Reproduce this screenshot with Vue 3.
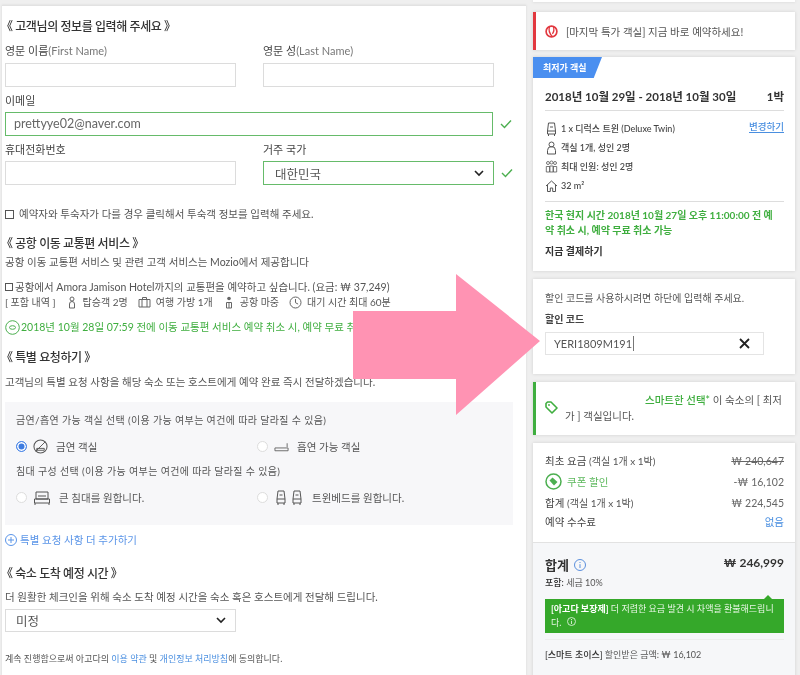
<template>
  <div class="page">
    <div class="left">
      <h2 class="title first">《 고객님의 정보를 입력해 주세요 》</h2>
      <div class="row name-row">
        <div class="field">
          <label>영문 이름<span class="en">(First Name)</span></label>
          <div class="input"></div>
        </div>
        <div class="field">
          <label>영문 성<span class="en">(Last Name)</span></label>
          <div class="input"></div>
        </div>
      </div>
      <div class="field wide">
        <label>이메일</label>
        <div class="with-check">
          <div class="input ok email">prettyye02@naver.com</div>
          <svg class="check" width="12" height="10" viewBox="0 0 12 10"><path d="M1 5l3.5 3.5L11 1.5" fill="none" stroke="#4caf50" stroke-width="1.4"/></svg>
        </div>
      </div>
      <div class="row phone-row">
        <div class="field">
          <label>휴대전화번호</label>
          <div class="input"></div>
        </div>
        <div class="field">
          <label>거주 국가</label>
          <div class="with-check">
            <div class="input ok select country">
              <span>대한민국</span>
              <svg width="10" height="7" viewBox="0 0 10 7"><path d="M1 1l4 4 4-4" fill="none" stroke="#222" stroke-width="1.6"/></svg>
            </div>
            <svg class="check" width="12" height="10" viewBox="0 0 12 10"><path d="M1 5l3.5 3.5L11 1.5" fill="none" stroke="#4caf50" stroke-width="1.4"/></svg>
          </div>
        </div>
      </div>
      <div class="guest-check">
        <span class="box"></span>
        <span>예약자와 투숙자가 다를 경우 클릭해서 투숙객 정보를 입력해 주세요.</span>
      </div>

      <h2 class="title airport">《 공항 이동 교통편 서비스 》</h2>
      <p class="line provider">공항 이동 교통편 서비스 및 관련 고객 서비스는 Mozio에서 제공합니다</p>
      <div class="line want">
        <span class="box small"></span>
        <span>공항에서 Amora Jamison Hotel까지의 교통편을 예약하고 싶습니다. (요금: ₩ 37,249)</span>
      </div>
      <div class="line includes">
        <span>[ 포함 내역 ]</span>
        <svg class="ic" width="12" height="13" viewBox="0 0 12 13"><circle cx="6" cy="3" r="2" fill="none" stroke="#666"/><path d="M3.5 12V8a2.5 2.5 0 0 1 5 0v4z" fill="none" stroke="#666"/></svg>
        <span>탑승객 2명</span>
        <svg class="ic" width="13" height="12" viewBox="0 0 13 12"><path d="M1 3.5h11V11H1zM4.5 3.5V1.5h4v2M4 3.5V11M9 3.5V11" fill="none" stroke="#666"/></svg>
        <span>여행 가방 1개</span>
        <svg class="ic" width="12" height="13" viewBox="0 0 12 13"><circle cx="6" cy="2.5" r="1.8" fill="#666"/><path d="M3.5 12V6.5h5V12zM6 6.5V12" fill="none" stroke="#666"/></svg>
        <span>공항 마중</span>
        <svg class="ic" width="13" height="13" viewBox="0 0 13 13"><circle cx="6.5" cy="6.5" r="5.5" fill="none" stroke="#666"/><path d="M6.5 3v3.7l2.6 1.4" fill="none" stroke="#666"/></svg>
        <span>대기 시간 최대 60분</span>
      </div>
      <div class="free-cancel">
        <svg width="15" height="15" viewBox="0 0 15 15"><circle cx="7.5" cy="7.5" r="6.8" fill="none" stroke="#4caf50"/><ellipse cx="7.5" cy="7.5" rx="3" ry="1.8" fill="none" stroke="#4caf50"/></svg>
        <span>2018년 10월 28일 07:59 전에 이동 교통편 서비스 예약 취소 시, 예약 무료 취소 가능</span>
      </div>

      <h2 class="title special">《 특별 요청하기 》</h2>
      <p class="line special-desc">고객님의 특별 요청 사항을 해당 숙소 또는 호스트에게 예약 완료 즉시 전달하겠습니다.</p>
      <div class="request-box">
        <p class="req-head">금연/흡연 가능 객실 선택 (이용 가능 여부는 여건에 따라 달라질 수 있음)</p>
        <div class="req-row">
          <div class="opt">
            <span class="radio on"></span>
            <svg class="opt-ic" width="15" height="15" viewBox="0 0 16 16"><circle cx="8" cy="8" r="7" fill="none" stroke="#555" stroke-width="1.1"/><path d="M3 13L13 3M4 10h8v2H4z" fill="none" stroke="#555"/></svg>
            <span>금연 객실</span>
          </div>
          <div class="opt">
            <span class="radio"></span>
            <svg class="opt-ic" width="15" height="10" viewBox="0 0 16 10"><path d="M1 6h14v3H1zM14 1v4" fill="none" stroke="#666"/></svg>
            <span>흡연 가능 객실</span>
          </div>
        </div>
        <p class="req-head bed">침대 구성 선택 (이용 가능 여부는 여건에 따라 달라질 수 있음)</p>
        <div class="req-row">
          <div class="opt">
            <span class="radio"></span>
            <svg class="opt-ic" width="18" height="14" viewBox="0 0 18 14"><path d="M3 1h12v7H3zM1.5 8h15v4h-15zM5 5h8M2 12v2M16 12v2" fill="none" stroke="#555"/></svg>
            <span>큰 침대를 원합니다.</span>
          </div>
          <div class="opt">
            <span class="radio"></span>
            <svg class="opt-ic twin" width="10" height="15" viewBox="0 0 10 15"><path d="M2 1h6l1 8v4H1V9zM3.5 5h3M1 9h8M2 13v2M8 13v2" fill="none" stroke="#555"/></svg>
            <svg class="opt-ic twin" width="10" height="15" viewBox="0 0 10 15"><path d="M2 1h6l1 8v4H1V9zM3.5 5h3M1 9h8M2 13v2M8 13v2" fill="none" stroke="#555"/></svg>
            <span class="twin-text">트윈베드를 원합니다.</span>
          </div>
        </div>
      </div>
      <div class="add-more">
        <svg width="12" height="12" viewBox="0 0 12 12"><circle cx="6" cy="6" r="5.5" fill="none" stroke="#5b95e8"/><path d="M6 3v6M3 6h6" stroke="#5b95e8"/></svg>
        <span>특별 요청 사항 더 추가하기</span>
      </div>

      <h2 class="title arrival">《 숙소 도착 예정 시간 》</h2>
      <p class="line arrival-desc">더 원활한 체크인을 위해 숙소 도착 예정 시간을 숙소 혹은 호스트에게 전달해 드립니다.</p>
      <div class="input select arrival-select">
        <span>미정</span>
        <svg width="10" height="7" viewBox="0 0 10 7"><path d="M1 1l4 4 4-4" fill="none" stroke="#222" stroke-width="1.6"/></svg>
      </div>
      <p class="terms">계속 진행함으로써 아고다의 <a>이용 약관</a> 및 <a>개인정보 처리방침</a>에 동의합니다.</p>
    </div>

    <div class="right">
      <div class="card sliver"></div>
      <div class="card alert red">
        <svg width="13" height="13" viewBox="0 0 14 14"><circle cx="7" cy="7" r="5.8" fill="none" stroke="#e2383f" stroke-width="1.8"/><path d="M5 1.5c-1.5 4 0 8 3 11M9 1.5c1 3 .5 6-1 8" fill="none" stroke="#e2383f" stroke-width="1.4"/></svg>
        <span>[마지막 특가 객실] 지금 바로 예약하세요!</span>
      </div>

      <div class="card room">
        <div class="ribbon">최저가 객실</div>
        <div class="dates"><span>2018년 10월 29일 - 2018년 10월 30일</span><span>1박</span></div>
        <div class="facts">
          <div class="fact">
            <svg width="11" height="14" viewBox="0 0 11 14"><path d="M2.5 1h6l1 8v3h-8V9zM4 5h3M1.5 9h8M2.5 12v2M8.5 12v2" fill="none" stroke="#555"/></svg>
            <span>1 x 디럭스 트윈 (Deluxe Twin)</span>
            <a class="change">변경하기</a>
          </div>
          <div class="fact">
            <svg width="11" height="14" viewBox="0 0 11 14"><circle cx="5.5" cy="3.5" r="2.5" fill="none" stroke="#555"/><path d="M1.5 13V9.5a4 4 0 0 1 8 0V13z" fill="none" stroke="#555"/></svg>
            <span>객실 1개, 성인 2명</span>
          </div>
          <div class="fact">
            <svg width="12" height="13" viewBox="0 0 12 13"><circle cx="2.5" cy="3" r="1.5" fill="none" stroke="#555" stroke-width=".8"/><circle cx="6" cy="2.5" r="1.5" fill="none" stroke="#555" stroke-width=".8"/><circle cx="9.5" cy="3" r="1.5" fill="none" stroke="#555" stroke-width=".8"/><path d="M.8 12V6.5h3.4V12zM4.3 12V6h3.4v6zM7.8 12V6.5h3.4V12z" fill="none" stroke="#555" stroke-width=".8"/></svg>
            <span>최대 인원: 성인 2명</span>
          </div>
          <div class="fact">
            <svg width="12" height="12" viewBox="0 0 12 12"><path d="M.5 6L6 1l5.500 5M2 5v6.500h2.800V8h2.400v3.500H10V5" fill="none" stroke="#555"/></svg>
            <span>32 m²</span>
          </div>
        </div>
        <p class="refund">한국 현지 시간 2018년 10월 27일 오후 11:00:00 전 예약 취소 시, 예약 무료 취소 가능</p>
        <p class="pay-now">지금 결제하기</p>
      </div>

      <div class="card coupon">
        <p class="coupon-text">할인 코드를 사용하시려면 하단에 입력해 주세요.</p>
        <p class="coupon-label">할인 코드</p>
        <div class="coupon-input">
          <span class="code">YERI1809M191</span>
          <svg width="11" height="11" viewBox="0 0 11 11"><path d="M1 1l9 9M10 1l-9 9" stroke="#222" stroke-width="1.8"/></svg>
        </div>
      </div>

      <div class="card alert green">
        <svg class="tag" width="13" height="13" viewBox="0 0 13 13"><path d="M1 2.500L2.500 1H6l6 6-5 5-6-6z" fill="none" stroke="#3fae3f" stroke-width="1.6" stroke-linejoin="round"/><circle cx="4" cy="4" r=".9" fill="#3fae3f"/></svg>
        <p><b>스마트한 선택*</b> 이 숙소의 [ 최저가 ] 객실입니다.</p>
      </div>

      <div class="card price">
        <div class="price-top">
          <div class="price-row">
            <span>최초 요금 <small>(객실 1개 x 1박)</small></span>
            <s>₩ 240,647</s>
          </div>
          <div class="price-row discount">
            <span class="coupon-name">
              <svg width="17" height="17" viewBox="0 0 17 17"><circle cx="8.500" cy="8.500" r="7.500" fill="none" stroke="#4caf50" stroke-width="1.5"/><path d="M4.500 7.500L7.500 4.500 12.500 9 9 12.500z" fill="#4caf50"/></svg>
              쿠폰 할인
            </span>
            <span class="muted">-₩ 16,102</span>
          </div>
          <div class="price-row">
            <span>합계 <small>(객실 1개 x 1박)</small></span>
            <span class="muted">₩ 224,545</span>
          </div>
          <div class="price-row">
            <span>예약 수수료</span>
            <a>없음</a>
          </div>
        </div>
        <div class="price-total">
          <div class="total-row">
            <span class="total-label">
              합계
              <svg width="12" height="12" viewBox="0 0 12 12"><circle cx="6" cy="6" r="5.500" fill="none" stroke="#5b8fdc"/><path d="M6 3v1M6 5.200V9" stroke="#5b8fdc"/></svg>
            </span>
            <span class="total-num">₩ 246,999</span>
          </div>
          <p class="tax"><b>포함:</b> 세금 10%</p>
          <div class="guarantee">
            <b>[아고다 보장제]</b> 더 저렴한 요금 발견 시 차액을 환불해드립니다.
            <svg width="9" height="9" viewBox="0 0 9 9"><circle cx="4.500" cy="4.500" r="4" fill="none" stroke="#cde8c8"/><path d="M4.500 2v1M4.500 3.800V7" stroke="#cde8c8"/></svg>
          </div>
          <p class="smart"><b>[스마트 초이스]</b> 할인받은 금액: ₩ 16,102</p>
        </div>
      </div>
    </div>

    <svg class="arrow" width="188" height="142" viewBox="0 0 188 142"><path d="M0 37H103V0L187 67 103 141V105H0z" fill="#ff93b3"/></svg>
  </div>
</template>

<script setup>
</script>

<style>
html, body { margin: 0; background: #efefef; }
</style>

<style scoped>
.page {
  position: relative;
  display: flex;
  align-items: flex-start;
  width: 800px;
  height: 675px;
  overflow: hidden;
  background: #efefef;
  font-family: "Lato", "Noto Sans CJK KR", sans-serif;
  color: #444;
  filter: blur(0.3px);
}
p, h2 { margin: 0; font-weight: normal; }
a { color: #4a8fe0; }
svg { flex: none; display: block; }

.left {
  box-sizing: border-box;
  width: 524px;
  height: 670px;
  margin: 5px 0 0 2px;
  padding: 0 0 0 3px;
  background: #fff;
  border-top: 1px solid #e2e2e2;
  box-shadow: 0 0 2px #d5d5d5;
}
.title {
  margin-left: -4px;
  font-size: 12px;
  line-height: 18px;
  font-weight: 500;
  letter-spacing: -0.4px;
  color: #333;
}
.first { margin-top: 12px; }
.row { display: flex; gap: 27px; }
.field { width: 231px; }
.field.wide { width: auto; margin-top: 6px; }
.field label {
  display: block;
  font-size: 11px;
  line-height: 16px;
  color: #444;
}
.en { color: #777; }
.name-row { margin-top: 7px; }
.name-row label { margin-bottom: 4px; }
.input {
  box-sizing: border-box;
  height: 24px;
  border: 1px solid #dcdcdc;
  background: #fff;
}
.with-check { display: flex; align-items: center; gap: 7px; }
.field.wide label { margin-bottom: 3px; }
.email {
  width: 488px;
  padding-left: 8px;
  font-size: 12.5px;
  line-height: 21px;
  color: #666;
}
.ok { border-color: #66bb6a; }
.phone-row { margin-top: 6px; }
.phone-row label { margin-bottom: 3px; }
.phone-row .with-check { width: 250px; }
.select {
  display: flex;
  align-items: center;
  justify-content: space-between;
  padding: 0 9px 0 11px;
  font-size: 12.5px;
  color: #555;
}
.country { width: 231px; flex: none; }
.guest-check {
  display: flex;
  align-items: center;
  gap: 5px;
  margin-top: 21px;
  font-size: 10.5px;
  line-height: 16px;
  color: #555;
}
.box {
  box-sizing: border-box;
  width: 9px;
  height: 9px;
  border: 1px solid #555;
  flex: none;
}
.line { font-size: 10.5px; line-height: 16px; color: #555; }
.airport { margin-top: 13px; }
.provider { margin-top: 1px; }
.want { display: flex; align-items: center; gap: 2px; margin-top: 9px; }
.box.small { width: 8px; height: 8px; }
.includes { display: flex; align-items: center; margin-top: -1px; font-size: 10px; }
.includes span { margin-right: 10px; white-space: nowrap; }
.includes .ic { margin-right: 5px; }
.free-cancel {
  display: flex;
  align-items: center;
  gap: 1px;
  margin-top: 9px;
  font-size: 10.5px;
  line-height: 16px;
  color: #3fae3f;
  white-space: nowrap;
}
.special { margin-top: 14px; }
.special-desc { margin-top: 7px; }
.request-box {
  box-sizing: border-box;
  width: 508px;
  height: 123px;
  margin-top: 12px;
  padding: 10px 11px 0;
  background: #f7f7f9;
}
.req-head { font-size: 10px; line-height: 16px; letter-spacing: .35px; color: #555; }
.req-head.bed { margin-top: 6px; }
.req-row { display: flex; margin-top: 8px; }
.opt {
  display: flex;
  align-items: center;
  width: 241px;
  height: 21px;
  font-size: 10.5px;
  color: #555;
}
.radio {
  box-sizing: border-box;
  flex: none;
  width: 11px;
  height: 11px;
  margin-right: 6px;
  border: 1px solid #ddd;
  border-radius: 50%;
  background: #fff;
}
.radio.on { border: 1px solid #4a86e8; box-shadow: inset 0 0 0 1.5px #fff; background: #3d7be0; }
.opt-ic { margin-right: 8px; }
.opt-ic.twin { margin-right: 6px; }
.radio + .opt-ic.twin { margin-left: 2px; }
.twin-text { margin-left: 4px; }
.add-more {
  display: flex;
  align-items: center;
  gap: 3px;
  margin-top: 7px;
  font-size: 10.5px;
  line-height: 16px;
  color: #5b95e8;
}
.arrival { margin-top: 17px; }
.arrival-desc { margin-top: 6px; }
.arrival-select { width: 231px; height: 23px; padding: 0 9px 0 10px; margin-top: 4px; }
.terms { margin-top: 20px; font-size: 9px; line-height: 14px; color: #555; }

.right { width: 262px; margin-left: 7px; }
.card {
  box-sizing: border-box;
  margin-bottom: 8px;
  background: #fff;
  box-shadow: 0 0 3px #cfcfcf;
}
.sliver { height: 2px; margin-bottom: 10px; }
.alert { display: flex; }
.alert.red {
  align-items: center;
  gap: 8px;
  height: 38px;
  margin-bottom: 7px;
  padding-left: 9px;
  border-left: 3px solid #e2383f;
  font-size: 10.5px;
  color: #555;
}
.room { position: relative; height: 214px; padding: 31px 11px 0 12px; }
.ribbon {
  position: absolute;
  left: 0;
  top: 0;
  box-sizing: border-box;
  width: 69px;
  height: 21px;
  padding-left: 10px;
  background: #4a8ff0;
  clip-path: polygon(0 0, 100% 0, 88% 100%, 0 100%);
  color: #fff;
  font-size: 9px;
  font-weight: 700;
  line-height: 21px;
}
.dates {
  display: flex;
  justify-content: space-between;
  padding-bottom: 5px;
  border-bottom: 1px solid #ddd;
  font-size: 11.5px;
  font-weight: 700;
  line-height: 17px;
  color: #333;
  white-space: nowrap;
}
.facts { padding: 8px 0 6px; border-bottom: 1px solid #ddd; }
.fact {
  display: flex;
  align-items: center;
  gap: 3px;
  height: 19px;
  font-size: 9px;
  font-weight: 500;
  color: #444;
}
.fact svg { width: 13px; }
.change {
  margin-left: auto;
  margin-top: -4px;
  font-size: 9.5px;
  border-bottom: 1px solid #4a8fe0;
  line-height: 11px;
}
.refund {
  margin-top: 6px;
  padding-right: 4px;
  word-break: break-all;
  font-size: 10px;
  font-weight: 700;
  line-height: 15px;
  color: #3fae3f;
}
.pay-now { margin-top: 6px; font-size: 10px; font-weight: 700; line-height: 15px; color: #333; }
.coupon { height: 95px; padding: 12px 12px 0; }
.coupon-text { font-size: 10px; line-height: 15px; color: #555; }
.coupon-label { margin-top: 6px; font-size: 10px; font-weight: 700; line-height: 15px; color: #444; }
.coupon-input {
  box-sizing: border-box;
  display: flex;
  align-items: center;
  justify-content: space-between;
  width: 219px;
  height: 23px;
  margin-top: 5px;
  padding: 0 13px 0 8px;
  border: 1px solid #e4e4e4;
  font-size: 11px;
  color: #555;
}
.code { padding-right: 1px; border-right: 1px solid #777; line-height: 15px; }
.alert.green {
  height: 53px;
  padding: 10px 10px 0 9px;
  border-left: 3px solid #3fae3f;
  font-size: 10.5px;
  line-height: 16px;
  color: #555;
}
.tag { margin-top: 9px; }
.alert.green p { margin-left: 7px; text-indent: 80px; }
.alert.green b { font-weight: 500; color: #3fae3f; }
.price { height: 260px; margin-bottom: 0; }
.price-top {
  box-sizing: border-box;
  height: 100px;
  padding: 8px 11px 0 12px;
  border-bottom: 1px solid #e2e2e2;
}
.price-row {
  display: flex;
  justify-content: space-between;
  align-items: center;
  height: 19px;
  font-size: 10.5px;
  color: #444;
}
.price-row small { font-size: 10px; color: #555; }
.price-row s, .muted { font-size: 10.5px; color: #666; }
.discount { height: 23px; }
.coupon-name { display: flex; align-items: center; gap: 5px; color: #5cb85c; }
.price-total {
  box-sizing: border-box;
  height: 160px;
  padding: 11px 11px 0 12px;
  background: #f6f7f9;
}
.total-row { display: flex; justify-content: space-between; }
.total-label {
  display: flex;
  align-items: center;
  gap: 5px;
  font-size: 13px;
  font-weight: 700;
  line-height: 22px;
  color: #333;
}
.total-num { font-size: 12px; font-weight: 700; line-height: 18px; color: #333; }
.tax { font-size: 9px; line-height: 14px; color: #555; }
.tax b { font-weight: 500; color: #333; }
.guarantee {
  position: relative;
  box-sizing: border-box;
  height: 34px;
  margin-top: 9px;
  padding: 3px 6px 0;
  word-break: break-all;
  background: #35a82a;
  font-size: 9px;
  line-height: 14px;
  color: #e9f6e6;
}
.guarantee svg { display: inline-block; margin-left: 3px; }
.guarantee b { color: #fff; }
.guarantee::before {
  content: "";
  position: absolute;
  right: 12px;
  top: -4px;
  border-left: 4px solid transparent;
  border-right: 4px solid transparent;
  border-bottom: 4px solid #35a82a;
}
.smart {
  margin-top: 6px;
  padding-top: 8px;
  border-top: 1px solid #eee;
  font-size: 9px;
  line-height: 14px;
  color: #555;
}
.smart b { font-weight: 500; color: #333; }
.arrow { position: absolute; left: 353px; top: 274px; }
</style>
